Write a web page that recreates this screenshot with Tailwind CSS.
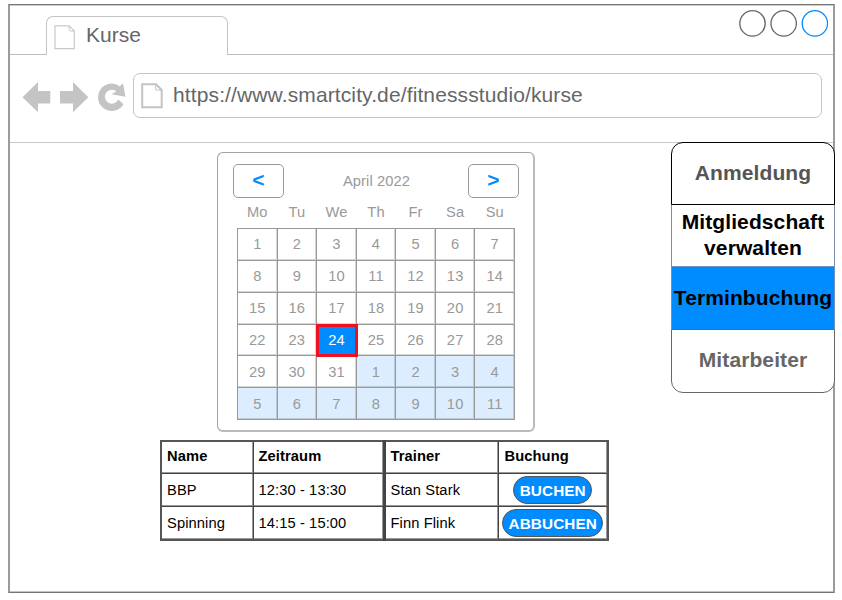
<!DOCTYPE html>
<html lang="de">
<head>
<meta charset="utf-8">
<title>Kurse</title>
<script src="https://cdn.jsdelivr.net/npm/@tailwindcss/browser@4"></script>
</head>
<body class="h-[600px] w-[842px] overflow-hidden bg-white pl-2 pt-1 font-['Liberation_Sans',Arial,sans-serif]">
<div class="flex h-[589px] w-[827px] flex-col border-x-2 border-y border-x-[#9b9b9b] border-y-[#757575] shadow-[inset_0_1px_0_#cccccc,inset_0_-1px_0_#c4c4c4]">
  <!-- tab strip -->
  <header class="flex h-[50px] shrink-0 items-end">
    <div class="w-9 self-stretch border-b border-[#bdbdbd]"></div>
    <div class="flex h-[39px] w-[182px] rounded-t-[7px] border border-b-0 border-[#c4c4c4] pl-[7px] pt-[8px]">
      <svg class="h-[25px] w-[22px] shrink-0" viewBox="0 0 22 25" fill="none" stroke="#c9c9c9"><path d="M1 .8H15L20.3 6V23.7H1Z" stroke-width="1.2"/><path d="M15 1Q15 5.5 16 6H20"/></svg>
      <span class="ml-[10px] mt-[-4px] text-[21px] leading-[28px] text-[#666]">Kurse</span>
    </div>
    <div class="flex flex-1 justify-end gap-[4px] self-stretch border-b border-[#bdbdbd] pr-[5px] pt-[5px]">
      <svg class="size-[27px]" viewBox="0 0 27 27" fill="none" stroke="#666" stroke-width="1.3"><circle cx="13.5" cy="13.4" r="12.7"/></svg>
      <svg class="size-[27px]" viewBox="0 0 27 27" fill="none" stroke="#666" stroke-width="1.3"><circle cx="13.7" cy="13.4" r="12.7"/></svg>
      <svg class="size-[27px]" viewBox="0 0 27 27" fill="none" stroke="#008cff" stroke-width="1.3"><circle cx="13.9" cy="13.4" r="12.7"/></svg>
    </div>
  </header>
  <!-- address bar -->
  <nav class="flex h-[88px] shrink-0 items-start border-b border-[#cacaca] pl-3 pt-[18px]">
    <svg class="mt-[9px] h-[31px] w-[105px] shrink-0" viewBox="22 82 105 31" fill="#c4c4c4">
      <path d="M22.5 97.2 38 82V91H50.3V103.5H38V112.3Z"/>
      <path d="M60 91H73V82L88.3 97.2 73 112.3V103.5H60Z"/>
      <path d="M123 83.2 125.5 96.7 111.5 94.3 116.4 91.3A7 7 0 1 0 118.3 99.5L123.5 104.3A13.7 13.7 0 1 1 119.8 86.2Z"/>
    </svg>
    <div class="ml-[6px] flex h-[45px] w-[689px] rounded-[7px] border border-[#c4c4c4] pl-[7px]">
      <svg class="mt-[9px] h-[26px] w-[22px] shrink-0" viewBox="0 0 22 26" fill="none" stroke="#c4c4c4"><path d="M1.2 1.2H15L20.7 7V24.2H1.2Z" stroke-width="2"/><path d="M14.7 1.5V7H20"/></svg>
      <span class="ml-[10px] mt-[7px] whitespace-nowrap text-[21px] leading-[28px] tracking-[0.12px] text-[#666]">https://www.smartcity.de/fitnessstudio/kurse</span>
    </div>
  </nav>
  <main class="flex items-start">
    <div class="ml-[150px] w-[450px] shrink-0">
      <!-- calendar -->
      <section class="ml-[57px] mt-[9px] h-[280px] w-[318px] rounded-[6px] border border-b-2 border-r-2 border-[#a3a3a3] border-b-[#bababa] border-r-[#bababa] pl-[15px] text-[14.7px] tracking-[0.1px] text-[#999]">
        <div class="mt-[11px] flex h-[34px] w-[286px] items-center justify-between">
          <button class="h-[34px] w-[51px] rounded-[5px] border border-[#999] pb-[2px] text-[21px] font-bold leading-[28px] text-[#008cff]">&lt;</button>
          <span class="pl-px">April 2022</span>
          <button class="h-[34px] w-[51px] rounded-[5px] border border-[#999] pb-[2px] text-[21px] font-bold leading-[28px] text-[#008cff]">&gt;</button>
        </div>
        <div class="ml-[4.5px] grid h-[30px] w-[277px] grid-cols-7 text-center leading-[28px]">
          <span>Mo</span><span>Tu</span><span>We</span><span>Th</span><span>Fr</span><span>Sa</span><span>Su</span>
        </div>
        <div id="days" class="ml-[4px] grid h-[192px] w-[278px] grid-cols-7 grid-rows-6 border-l border-t border-[#999] text-center"></div>
      </section>
      <!-- courses -->
      <table class="mt-[8px] h-[101px] w-[449px] table-fixed border-collapse border-2 border-[#555] text-left text-[14.7px] tracking-[0.1px] text-black [&_td]:shadow-[inset_-1px_-1px_0_#999] [&_th]:shadow-[inset_-1px_-1px_0_#999]">
        <colgroup><col class="w-[92px]"><col class="w-[131px]"><col class="w-[114px]"><col class="w-[110px]"></colgroup>
        <tr class="h-[32px]"><th class="border border-[#444] px-[5px] pb-[2px] pt-0">Name</th><th class="border border-[#444] px-[5px] pb-[2px] pt-0">Zeitraum</th><th class="border border-l-3 border-[#444] px-[5px] pb-[2px] pt-0">Trainer</th><th class="border border-[#444] px-[6px] pb-[2px] pt-0">Buchung</th></tr>
        <tr class="h-[33px]"><td class="border border-[#444] px-[5px] py-0">BBP</td><td class="border border-[#444] px-[5px] py-0">12:30 - 13:30</td><td class="border border-l-3 border-[#444] px-[5px] py-0">Stan Stark</td><td class="border border-[#444] p-0"><button class="mx-auto block h-[28px] w-[79px] rounded-full border border-[#555] bg-[#008cff] pt-[2px] text-[15.3px] font-bold leading-[24px] text-white">BUCHEN</button></td></tr>
        <tr class="h-[33px]"><td class="border border-[#444] px-[5px] py-0">Spinning</td><td class="border border-[#444] px-[5px] py-0">14:15 - 15:00</td><td class="border border-l-3 border-[#444] px-[5px] py-0">Finn Flink</td><td class="border border-[#444] p-0"><button class="mx-auto block h-[28px] w-[101px] rounded-full border border-[#555] bg-[#008cff] pt-[2px] text-[15.3px] font-bold leading-[24px] text-white">ABBUCHEN</button></td></tr>
      </table>
    </div>
    <!-- navigation -->
    <aside class="ml-[61px] mt-[-1px] w-[164px] shrink-0 text-center text-[21px] font-bold leading-[26px] tracking-[0.1px]">
      <div class="flex h-[63px] items-center justify-center rounded-t-[12px] border border-black bg-white pb-[2px] text-[#555]">Anmeldung</div>
      <div class="flex h-[61px] items-center justify-center border-x border-[#7b8bb0] bg-white pb-[2px] text-black">Mitgliedschaft<br>verwalten</div>
      <div class="flex h-[63px] items-center justify-center border border-b-0 border-[#6f93c0] bg-[#008cff] text-black">Terminbuchung</div>
      <div class="flex h-[64px] items-center justify-center rounded-b-[12px] border border-[#666] bg-white pb-[2px] text-[#666]">Mitarbeiter</div>
    </aside>
  </main>
</div>
<script>
  // 31 days of the month followed by the first 11 of the next one
  const grid = document.getElementById('days');
  for (let i = 0; i < 42; i++) {
    const cell = document.createElement('div');
    cell.textContent = i < 31 ? i + 1 : i - 30;
    cell.className = 'flex items-center justify-center border-b border-r border-[#999] shadow-[inset_-1px_-1px_0_#99999966] ' +
      (i === 23 ? 'bg-[#008cff] text-white outline-3 outline-[#f01020] -outline-offset-2 z-10' : i > 30 ? 'bg-[#dcedff]' : 'bg-white');
    grid.append(cell);
  }
</script>
</body>
</html>
